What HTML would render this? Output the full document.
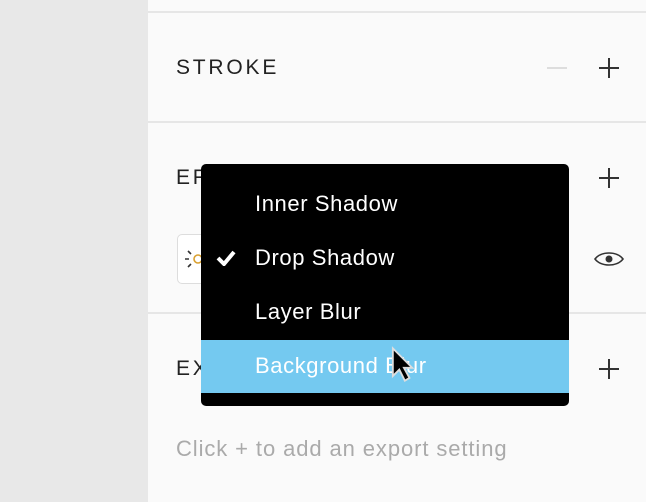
<!DOCTYPE html>
<html><head><meta charset="utf-8"><style>
html,body{margin:0;padding:0}
body{width:646px;height:502px;background:#fafafa;position:relative;overflow:hidden;font-family:"Liberation Sans",sans-serif}
.left{position:absolute;left:0;top:0;width:148px;height:502px;background:#e8e8e8}
.hr{position:absolute;left:148px;right:0;height:2px;background:#e6e6e6}
.lbl{position:absolute;left:176px;font-size:21px;letter-spacing:2.8px;color:#222}
.plus{position:absolute;left:598px;width:22px;height:22px}
.menu{position:absolute;left:201px;top:164px;width:368px;height:242px;background:#000;border-radius:5px;overflow:hidden}
.it{position:absolute;left:54px;color:#fff;font-size:22px;letter-spacing:0.6px;white-space:nowrap}
</style></head><body>
<div class="left"></div>
<div class="hr" style="top:11px"></div>
<div class="hr" style="top:121px"></div>
<div class="hr" style="top:312px"></div>
<div class="lbl" style="top:56px">STROKE</div>
<div style="position:absolute;left:547px;top:67px;width:20px;height:2px;background:#ddd"></div>
<svg class="plus" style="top:57px" viewBox="0 0 22 22"><path d="M11 1V21M1 11H21" stroke="#333" stroke-width="2"/></svg>
<div class="lbl" style="top:166px">EF</div>
<svg class="plus" style="top:167px" viewBox="0 0 22 22"><path d="M11 1V21M1 11H21" stroke="#333" stroke-width="2"/></svg>
<div style="position:absolute;left:177px;top:234px;width:40px;height:48px;border:1px solid #ddd;border-radius:5px;background:#fff"></div>
<svg style="position:absolute;left:184px;top:247px" width="20" height="24" viewBox="0 0 20 24"><path d="M1 12H5M4 4L7 7M4 20L7 17" stroke="#333" stroke-width="1.6"/><circle cx="14" cy="12" r="4" fill="none" stroke="#d9a030" stroke-width="1.6"/></svg>
<svg style="position:absolute;left:593px;top:249px" width="32" height="20" viewBox="0 0 32 20"><path d="M2 10C8 2 24 2 30 10C24 18 8 18 2 10Z" fill="none" stroke="#333" stroke-width="1.6"/><circle cx="16" cy="10" r="3.5" fill="#333"/></svg>
<div class="lbl" style="top:357px">EX</div>
<svg class="plus" style="top:358px" viewBox="0 0 22 22"><path d="M11 1V21M1 11H21" stroke="#333" stroke-width="2"/></svg>
<div style="position:absolute;left:176px;top:436px;font-size:22px;letter-spacing:0.9px;color:#aaa;white-space:nowrap">Click + to add an export setting</div>
<div class="menu">
<div class="it" style="top:27px">Inner Shadow</div>
<svg style="position:absolute;left:15px;top:86px" width="20" height="16" viewBox="0 0 20 16"><path d="M2 8L8 14L18 2" fill="none" stroke="#fff" stroke-width="4"/></svg>
<div class="it" style="top:81px">Drop Shadow</div>
<div class="it" style="top:135px">Layer Blur</div>
<div style="position:absolute;left:0;top:176px;width:368px;height:53px;background:#74c9f0"></div>
<div class="it" style="top:189px">Background Blur</div>
</div>
<svg style="position:absolute;left:391px;top:346px" width="24" height="38" viewBox="0 0 26 40"><path d="M2 2V32L9 25L15 37L20 34L14 23H23Z" fill="#000" stroke="#ddd" stroke-width="2"/></svg>
</body></html>
